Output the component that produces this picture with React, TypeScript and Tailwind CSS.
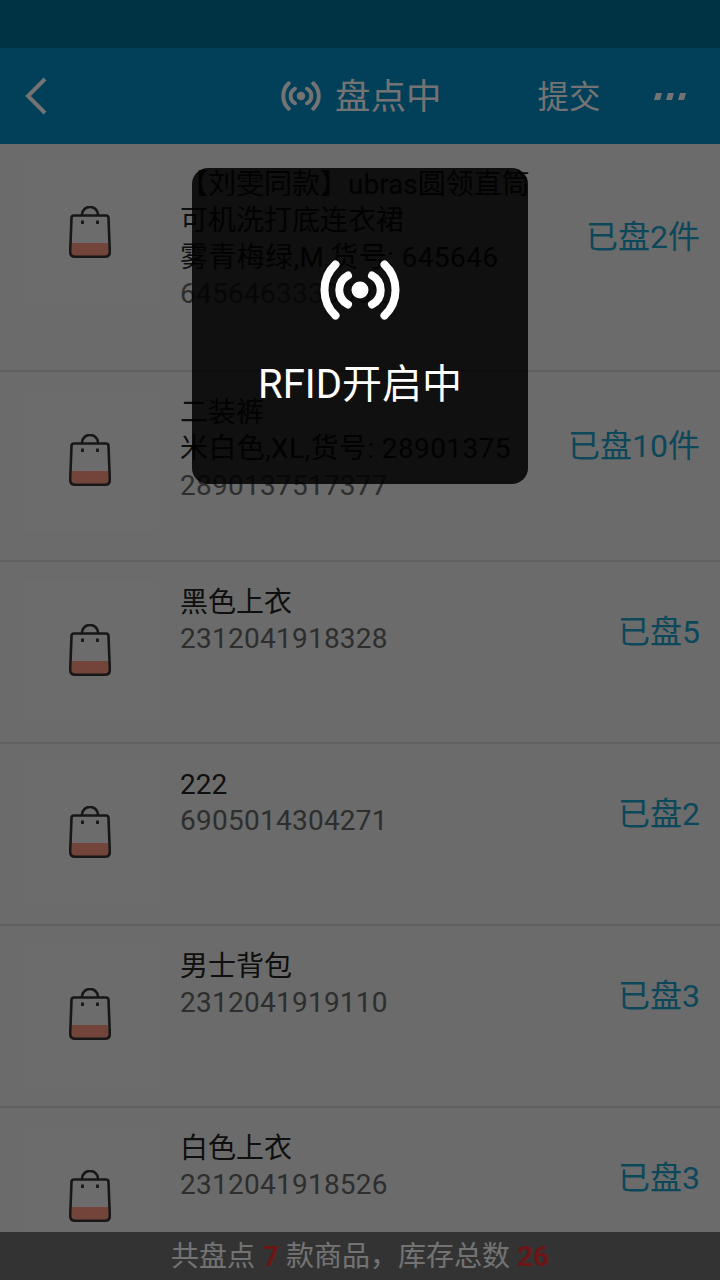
const rows = [
  { lines: ['【刘雯同款】ubras圆领直筒', '可机洗打底连衣裙', '雾青梅绿,M,货号: 645646'], code: '6456463330002', count: '已盘2件', cls: 'h-[228px]' },
  { lines: ['二装裤', '米白色,XL,货号: 28901375'], code: '2890137517377', count: '已盘10件', cls: 'h-[190px]' },
  { lines: ['黑色上衣'], code: '2312041918328', count: '已盘5', cls: 'h-[182px]' },
  { lines: ['222'], code: '6905014304271', count: '已盘2', cls: 'h-[182px]' },
  { lines: ['男士背包'], code: '2312041919110', count: '已盘3', cls: 'h-[182px]' },
  { lines: ['白色上衣'], code: '2312041918526', count: '已盘3', cls: 'h-[182px]' },
];

function Signal({ className }: { className: string }) {
  return (
    <svg viewBox="0 0 80 60" className={className} fill="none" stroke="currentColor" strokeWidth="8" strokeLinecap="round">
      <circle cx="40" cy="30" r="8.5" fill="currentColor" stroke="none" />
      <path d="M28 15.5A16.4 16.4 0 0 0 28 44.5" />
      <path d="M52 15.5A16.4 16.4 0 0 1 52 44.5" />
      <path d="M15.5 4.5A35 35 0 0 0 15.5 55.5" />
      <path d="M64.5 4.5A35 35 0 0 1 64.5 55.5" />
    </svg>
  );
}

function Bag() {
  return (
    <svg viewBox="0 0 42 52" className="h-[52px] w-[42px]" fill="none">
      <path d="M3 37H39L40 46Q40 51 36 51H6Q2 51 2 46Z" fill="#ff9a80" />
      <path d="M5 9.5H37Q39.5 9.5 39.5 12L40.8 46Q40.8 50.7 36 50.7H6Q1.2 50.7 1.2 46L2.5 12Q2.5 9.5 5 9.5Z" stroke="#333" strokeWidth="2.6" />
      <path d="M13 9V8.5A8 7.5 0 0 1 29 8.5V9" stroke="#333" strokeWidth="2.6" />
      <path d="M13.5 14.5V18M28.5 14.5V18" stroke="#333" strokeWidth="2.8" />
    </svg>
  );
}

export default function App() {
  return (
    <div className="relative h-[1280px] w-[720px] overflow-hidden bg-[#ededed] font-['Roboto','Noto_Sans_CJK_SC',sans-serif]">
      <div className="h-12 bg-[#007397]" />
      <div className="flex h-24 items-center bg-[#068cc4] text-white">
        <svg viewBox="0 0 24 38" className="ml-[24px] h-[38px] w-[24px]" fill="none" stroke="currentColor" strokeWidth="4">
          <path d="M21 2L4 19L21 36" />
        </svg>
        <div className="ml-[233px] flex items-center gap-[14px]">
          <Signal className="h-[30px] w-[40px]" />
          <span className="pt-[3px] text-[35.5px]">盘点中</span>
        </div>
        <span className="ml-[96px] pt-[3px] text-[31.5px]">提交</span>
        <svg viewBox="0 0 32 7" className="ml-[53px] h-[7px] w-[32px]" fill="currentColor">
          <path d="M2 0H8L6 7H0ZM14 0H20L18 7H12ZM26 0H32L30 7H24Z" />
        </svg>
      </div>

      {rows.map((row) => (
        <div key={row.code} className={`flex border-b-2 border-[#d8d8d8] ${row.cls}`}>
          <div className="ml-[24px] mt-[18px] flex h-[142px] w-[134px] shrink-0 items-start justify-center bg-[#f0f0f0] pr-[2px] pt-[44px]">
            <Bag />
          </div>
          <div className="ml-[22px] w-[350px] shrink-0 whitespace-nowrap pt-[22.5px] text-[28px] leading-[36.6px]">
            {row.lines.map((line) => (
              <div key={line} className={line.includes('货号') ? 'tracking-[0.4px] text-[#222]' : 'text-[#222]'}>{line}</div>
            ))}
            <div className="tracking-[0.25px] text-[#666]">{row.code}</div>
          </div>
          <div className="flex flex-1 items-center justify-end pb-[40px] pr-[20px] text-[32px] text-[#1c9ec8]">
            <span className="whitespace-nowrap">{row.count}</span>
          </div>
        </div>
      ))}

      <div className="absolute inset-x-0 bottom-0 flex h-12 items-center justify-center bg-[#717171] pt-[2px] text-[28px] text-white">
        共盘点 <b className="ml-2 mr-[7px] text-[#f03030]">7</b> 款商品，库存总数 <b className="ml-[7px] text-[#f03030]">26</b>
      </div>

      <div className="absolute inset-0 bg-black/55" />

      <div className="absolute left-[192px] top-[168px] flex h-[316px] w-[336px] flex-col items-center rounded-2xl bg-black/85 text-white">
        <Signal className="mt-[92px] h-[60px] w-[80px]" />
        <div className="mt-[41px] text-[40px] leading-[48px]">RFID开启中</div>
      </div>
    </div>
  );
}
